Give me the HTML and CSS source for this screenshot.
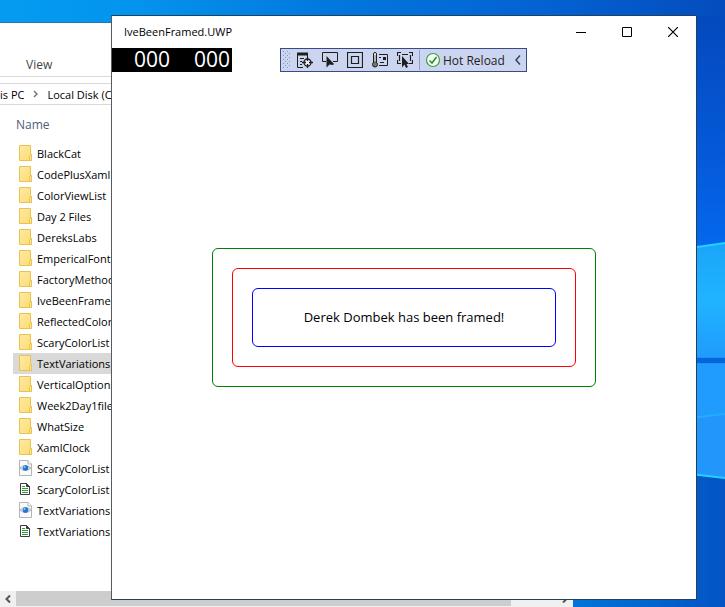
FILE: index.html
```
<!DOCTYPE html>
<html lang="en">
<head>
<meta charset="utf-8">
<title>IveBeenFramed.UWP</title>
<link rel="stylesheet" href="styles.css">
</head>
<body>
<svg width="0" height="0" class="defs" aria-hidden="true">
  <defs>
    <linearGradient id="fold" x1="0" y1="0" x2="1" y2="1"><stop offset="0" stop-color="#ffeaa3"/><stop offset="1" stop-color="#fddb74"/></linearGradient>
    <symbol id="folder" viewBox="0 0 14 16"><path d="M.5.5h11v9h1v6H.5z" fill="url(#fold)" stroke="#e8c34f"/><path d="M10.500 15.500v-4l1-2h1v6z" fill="#ffe794" stroke="#e8c34f"/></symbol>
    <symbol id="xaml" viewBox="0 0 14 16"><path d="M.5.500h8.500l3.500 3.500v11.500H.5z" fill="#fafafa" stroke="#b5b5b5"/><path d="M9 .5v3.500h3.500" fill="#fff" stroke="#b5b5b5"/><path d="M1 8q5-5 11 0-6 5-11 0z" fill="#dfe9f3" stroke="#a3b3c0"/><circle cx="6.500" cy="8" r="2.800" fill="#2475cf"/><circle cx="5.500" cy="7" r="1" fill="#8fd0ff"/></symbol>
    <symbol id="code" viewBox="0 0 14 16"><path d="M1.500 2.500h6l3 3v8h-9z" fill="#fff" stroke="#3b3b40"/><path d="M7.500 2.500v3h3z" fill="#3b3b40" stroke="#3b3b40"/><path d="M3 5.500h3M3 7.500h6M3 9.500h6M3 11.500h6" stroke="#2f9934"/></symbol>
  </defs>
</svg>
<div class="desktop">
  <svg class="wallpaper" viewBox="0 0 725 607" preserveAspectRatio="none" aria-hidden="true">
    <defs>
      <linearGradient id="sky"><stop offset="0" stop-color="#049cf1"/><stop offset=".18" stop-color="#0494ee"/><stop offset=".45" stop-color="#0278de"/><stop offset=".75" stop-color="#0462d2"/><stop offset="1" stop-color="#044cbe"/></linearGradient>
      <linearGradient id="side" x1="0" y1="0" x2="0" y2="1"><stop offset="0" stop-color="#0449bd"/><stop offset=".6" stop-color="#0559d9"/><stop offset="1" stop-color="#0468ee"/></linearGradient>
      <linearGradient id="pane" x1="0" y1="0" x2="0" y2="1"><stop offset="0" stop-color="#1ba4fa"/><stop offset=".5" stop-color="#20b4ff"/><stop offset="1" stop-color="#1f9bfc"/></linearGradient>
      <linearGradient id="low"><stop offset="0" stop-color="#0076da"/><stop offset="1" stop-color="#0453c5"/></linearGradient>
    </defs>
    <path d="M0 0h725v30H0z" fill="url(#sky)"/>
    <path d="M690 16h35v232h-35z" fill="url(#side)"/>
    <path d="M690 248l35-5v115h-35z" fill="url(#pane)"/>
    <path d="M690 357h35v7h-35z" fill="#0465dc"/>
    <path d="M690 364h35v50l-35 4z" fill="#209cff"/>
    <path d="M690 418l35-4v64l-35-4z" fill="#2296fb"/>
    <path d="M570 474h120l35 4v129H570z" fill="url(#low)"/>
    <path d="M690 248l35-5M690 474l35 4" stroke="#25d0ff" stroke-width="2"/>
    <path d="M690 418l35-4" stroke="#22adff" stroke-width="2"/>
    <path d="M690 357.500h35M690 363.500h35" stroke="#2490ee"/>
  </svg>

  <section class="explorer" aria-label="File Explorer">
    <nav class="ribbon"><a href="#">View</a></nav>
    <nav class="address"><a href="#">is PC</a><svg width="5" height="8" viewBox="0 0 5 8" aria-hidden="true"><path d="M1 1l3 3-3 3" fill="none" stroke="#777" stroke-width="1.500"/></svg><a href="#">Local Disk (C:)</a></nav>
    <div class="heading">Name</div>
    <ul class="files">
      <li><svg><use href="#folder"/></svg>BlackCat</li>
      <li><svg><use href="#folder"/></svg>CodePlusXaml</li>
      <li><svg><use href="#folder"/></svg>ColorViewList</li>
      <li><svg><use href="#folder"/></svg>Day 2 Files</li>
      <li><svg><use href="#folder"/></svg>DereksLabs</li>
      <li><svg><use href="#folder"/></svg>EmpericalFont</li>
      <li><svg><use href="#folder"/></svg>FactoryMethod</li>
      <li><svg><use href="#folder"/></svg>IveBeenFramed</li>
      <li><svg><use href="#folder"/></svg>ReflectedColors</li>
      <li><svg><use href="#folder"/></svg>ScaryColorList</li>
      <li class="selected"><svg><use href="#folder"/></svg>TextVariations</li>
      <li><svg><use href="#folder"/></svg>VerticalOptions</li>
      <li><svg><use href="#folder"/></svg>Week2Day1files</li>
      <li><svg><use href="#folder"/></svg>WhatSize</li>
      <li><svg><use href="#folder"/></svg>XamlClock</li>
      <li><svg><use href="#xaml"/></svg>ScaryColorList</li>
      <li><svg><use href="#code"/></svg>ScaryColorList</li>
      <li><svg><use href="#xaml"/></svg>TextVariationsP</li>
      <li><svg><use href="#code"/></svg>TextVariationsP</li>
    </ul>
    <div class="scrollbar">
      <button aria-label="Scroll left"><svg width="6" height="8" viewBox="0 0 6 8"><path d="M5 .5L1.500 4 5 7.500" fill="none" stroke="#555" stroke-width="2"/></svg></button>
      <div class="thumb"></div>
      <button aria-label="Scroll right"><svg width="6" height="8" viewBox="0 0 6 8"><path d="M1 .5L4.500 4 1 7.500" fill="none" stroke="#555" stroke-width="2"/></svg></button>
    </div>
  </section>

  <main class="app">
    <header class="titlebar">
      <h1>IveBeenFramed.UWP</h1>
      <button aria-label="Minimize"><svg width="10" height="10" viewBox="0 0 10 10"><path d="M0 5.500h10" stroke="#000"/></svg></button>
      <button aria-label="Maximize"><svg width="10" height="10" viewBox="0 0 10 10"><path d="M.5.500h9v9h-9z" fill="none" stroke="#000"/></svg></button>
      <button aria-label="Close"><svg width="10" height="10" viewBox="0 0 10 10"><path d="M0 0l10 10M10 0L0 10" stroke="#000" stroke-width="1.200"/></svg></button>
    </header>
    <div class="debug">
      <div class="counters"><span>000</span><span>000</span></div>
      <div class="tools" role="toolbar" aria-label="Debug tools">
        <svg class="grip" width="7" height="18" viewBox="0 0 7 18" aria-hidden="true"><path d="M.5 0v18M4.500 0v18" stroke="#8791b3" stroke-dasharray="1 3"/><path d="M2.500 2v16M6.500 2v16" stroke="#8791b3" stroke-dasharray="1 3"/></svg>
        <button aria-label="Go to Live Visual Tree"><svg viewBox="0 0 16 16"><path d="M0 .500h11v3H0z" fill="#1e1e1e"/><path d="M.5 3v12.500H6M10.500 3v2M3 6.500h4M3 9.500h2M3 12.500h2" fill="none" stroke="#1e1e1e"/><circle cx="10.500" cy="10.500" r="3.500" fill="#eef1fa" stroke="#1e1e1e" stroke-width="1.300"/><path d="M10.500 5v4M10.500 12v4M5 10.500h4M12 10.500h4" stroke="#1e1e1e" stroke-width="1.300"/></svg></button>
        <button aria-label="Select element"><svg viewBox="0 0 16 16"><path d="M4 9.500H.5V.5h15v9H11" fill="none" stroke="#1e1e1e"/><path d="M4.500 4v11.500l3-3 3.500.500L12 12z" fill="#1e1e1e"/></svg></button>
        <button aria-label="Display layout adorners"><svg viewBox="0 0 16 16"><path d="M.5.500h15v15H.5zM4.500 4.500h7v7h-7z" fill="none" stroke="#1e1e1e" stroke-width="1.200"/></svg></button>
        <button aria-label="Track focused element"><svg viewBox="0 0 16 16"><path d="M1.500 10V2q0-1.500 1.500-1.500T4.500 2v8" fill="#eef1fa" stroke="#1e1e1e"/><circle cx="3" cy="12.500" r="2.500" fill="#777" stroke="#1e1e1e"/><path d="M3 3v9" stroke="#777"/><path d="M7 2.500h8.500v11H7M7 5.500h2" fill="none" stroke="#1e1e1e"/><path d="M11 5h3v3h-3zM8 10h4v1H8z" fill="#1e1e1e"/></svg></button>
        <button aria-label="Select focused element"><svg viewBox="0 0 16 16"><path d="M.5 4V.5H4M12 .5h3.500V4M.5 8v3.500H4M12 11.500h3.500V8M5 2.500h6M2.500 3v6M13.500 3v6" fill="none" stroke="#1e1e1e" stroke-width="1.200"/><path d="M5 4v11.500l2.500-3L9 16l2-1-1.500-3H12z" fill="#1e1e1e"/></svg></button>
        <button class="reload"><svg viewBox="0 0 16 16" aria-hidden="true"><circle cx="8" cy="8" r="6.500" fill="#f7fcf7" stroke="#389f43" stroke-width="1.200"/><path d="M4.500 8.500L7 11l4.500-6" fill="none" stroke="#22922e" stroke-width="1.600"/></svg>Hot Reload</button>
        <button aria-label="Collapse toolbar"><svg class="collapse" viewBox="0 0 6 10"><path d="M5 .5L1 5l4 4.500" fill="none" stroke="#34406f" stroke-width="1.500"/></svg></button>
      </div>
    </div>
    <div class="stage">
      <div class="frame green"><div class="frame red"><div class="frame blue">Derek Dombek has been framed!</div></div></div>
    </div>
  </main>
</div>
</body>
</html>
```
FILE: styles.css
```
* { box-sizing: border-box; }
body {
  margin: 0;
  font-family: "Open Sans", "Noto Sans", sans-serif;
  font-size: 12px;
  color: #000;
}
button {
  display: flex;
  align-items: center;
  justify-content: center;
  margin: 0;
  padding: 0;
  border: 0;
  background: none;
  font: inherit;
  color: inherit;
}
svg { display: block; flex: none; }
a { color: inherit; text-decoration: none; }
.defs { position: absolute; }
.desktop {
  position: relative;
  min-height: 100vh;
  overflow: hidden;
  background: #0462d2;
}
.wallpaper { position: absolute; inset: 0; width: 100%; height: 100%; }

.explorer {
  position: absolute;
  top: 22px;
  bottom: 0;
  left: 0;
  width: 573px;
  display: flex;
  flex-direction: column;
  border-top: 1px solid #2378a8;
  background: #fff;
}
.ribbon {
  height: 54px;
  padding: 32px 26px 0;
  line-height: 20px;
  border-bottom: 1px solid #dadbdc;
  color: #444;
}
.address {
  display: flex;
  align-items: center;
  gap: 9px;
  height: 22px;
  margin-top: 6px;
  border: solid #d9d9d9;
  border-width: 1px 0;
  font-size: 11px;
  white-space: nowrap;
}
.heading {
  height: 38px;
  padding-left: 16px;
  line-height: 40px;
  color: #4c607a;
}
.files { flex: 1; margin: 0; padding: 0 0 0 13px; list-style: none; font-size: 11px; }
.files li {
  display: flex;
  align-items: center;
  gap: 4px;
  height: 21px;
  padding: 0 0 1px 6px;
}
.files svg { width: 14px; height: 16px; }
.selected { background: #d9d9d9; }
.scrollbar { display: flex; height: 16px; background: #f0f0f0; border-bottom: 1px solid #f0f0f0; }
.scrollbar button { width: 16px; }
.thumb { width: 495px; margin-right: auto; background: #cdcdcd; }

.app {
  position: absolute;
  top: 15px;
  right: 28px;
  bottom: 7px;
  left: 111px;
  display: flex;
  flex-direction: column;
  border: 1px solid #1f4260;
  border-left-color: #555b60;
  background: #fff;
}
.titlebar { display: flex; height: 32px; }
.titlebar h1 {
  flex: 1;
  margin: 0;
  padding-left: 12px;
  font-size: 11px;
  font-weight: 400;
  line-height: 32px;
}
.titlebar button { width: 46px; }
.debug { display: flex; gap: 48px; height: 24px; }
.counters { display: flex; background: #000; color: #fff; font-size: 21px; font-weight: 500; line-height: 22px; }
.counters span { width: 60px; padding-right: 2px; text-align: right; }
.tools {
  display: flex;
  align-items: center;
  width: 247px;
  border: 1px solid #3b4a82;
  background: #ccd5f0;
  color: #1e1e1e;
}
.grip { margin: 0 2px; }
.tools button { width: 25px; height: 22px; }
.tools button svg { width: 16px; height: 16px; }
.tools .reload {
  flex: 1;
  justify-content: flex-start;
  gap: 2px;
  height: 20px;
  margin-left: 2px;
  padding-left: 5px;
  border-left: 1px solid #8f9cc8;
  white-space: nowrap;
}
.tools button:last-child { width: 16px; }
.tools .collapse { width: 6px; height: 10px; }
.stage {
  flex: 1;
  display: grid;
  align-items: center;
  padding: 0 100px 36px;
}
.frame { padding: 19px; border: 1px solid; border-radius: 6px; }
.green { border-color: #008000; }
.red { border-color: #f00; }
.blue {
  border-color: #00f;
  color: #000;
  font-size: 13px;
  line-height: 19px;
  text-align: center;
  white-space: nowrap;
}
```
